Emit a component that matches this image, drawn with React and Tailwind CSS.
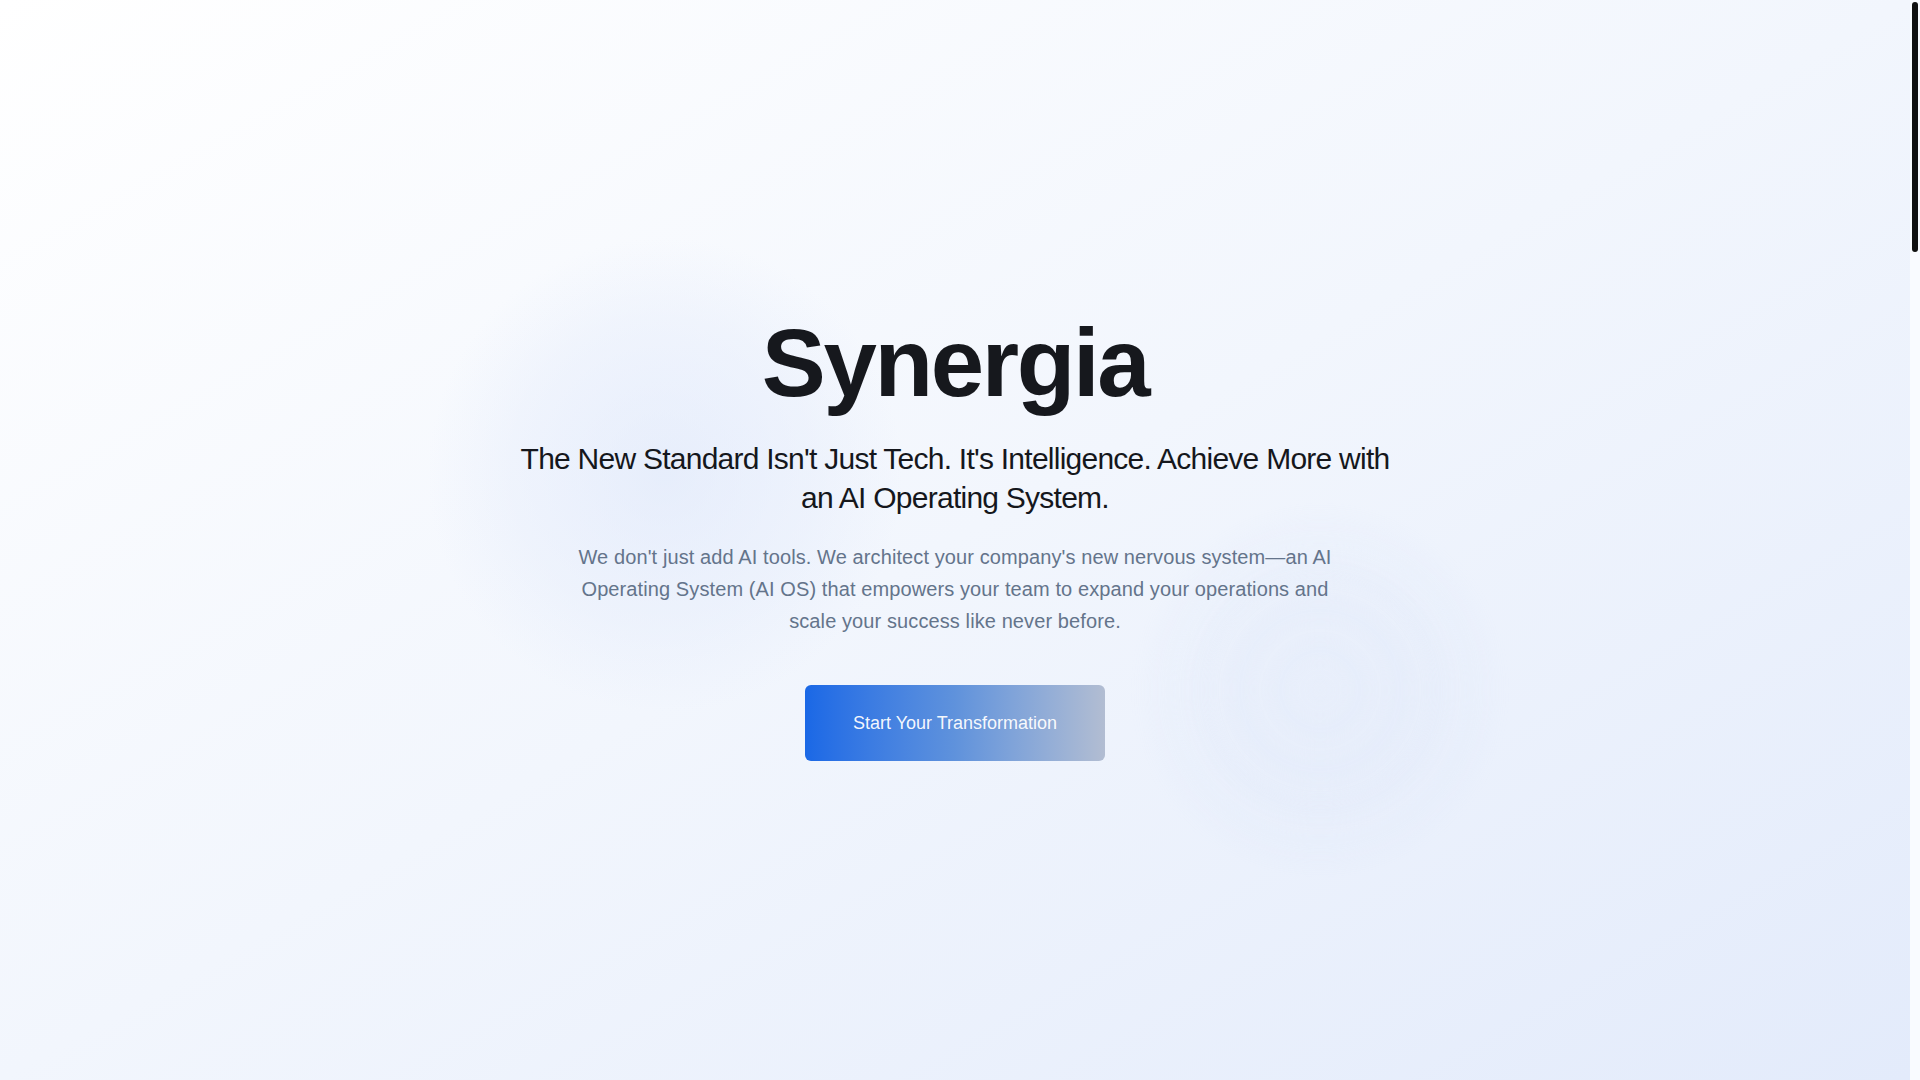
import React from 'react';

const Hero = () => {
    return (
        <section className="relative min-h-screen flex items-center justify-center overflow-hidden pb-1">
            {/* soft glows behind the hero copy */}
            <div className="pointer-events-none absolute left-[425px] top-[235px] w-[480px] h-[480px] rounded-full bg-[radial-gradient(circle,rgba(219,229,250,0.55)_0%,rgba(226,234,251,0.35)_45%,rgba(255,255,255,0)_70%)]"></div>
            <div className="pointer-events-none absolute left-[1130px] top-[495px] w-[380px] h-[390px] rounded-full bg-[repeating-radial-gradient(circle,rgba(214,225,248,0.3)_0px,rgba(214,225,248,0.14)_20px,rgba(214,225,248,0.3)_40px)] blur-[8px] [mask-image:radial-gradient(circle,black_35%,transparent_70%)]"></div>

            <div className="relative flex flex-col items-center text-center px-6">
                <h1 className="text-[96px] leading-none font-bold tracking-tight text-[#16181d] mb-7">
                    Synergia
                </h1>
                <h2 className="max-w-4xl text-3xl leading-[1.3] font-normal tracking-tight text-[#15171c] mb-6">
                    The New Standard Isn't Just Tech. It's Intelligence. Achieve More with an AI Operating System.
                </h2>
                <p className="max-w-3xl text-xl leading-8 tracking-[0.005em] text-[#64748b] mb-12">
                    We don't just add AI tools. We architect your company's new nervous system—an AI Operating System (AI OS) that empowers your team to expand your operations and scale your success like never before.
                </p>
                <button className="px-12 py-6 text-lg leading-7 text-white/95 rounded-md bg-gradient-to-r from-[#1a68e6] via-[#5f92dc] to-[#b2bdd2]">
                    Start Your Transformation
                </button>
            </div>
        </section>
    );
};

export default function App() {
    return (
        <div className="h-screen flex font-['Liberation_Sans',Arial,sans-serif] bg-[#f2f6fd]">
            <main className="flex-1 overflow-y-auto [scrollbar-width:none]">
                <div className="bg-gradient-to-br from-white via-[#f2f6fd] to-[#e3ebfb] min-h-screen">
                    <Hero />
                </div>
                <div className="bg-[#e8eefb] h-[3570px]"></div>
            </main>
            {/* scroll track */}
            <div className="w-[10px] shrink-0 bg-[#f9fbff] flex flex-col items-center">
                <div className="mt-[2px] w-[6px] h-[250px] rounded-full bg-[#111111]"></div>
            </div>
        </div>
    );
}
